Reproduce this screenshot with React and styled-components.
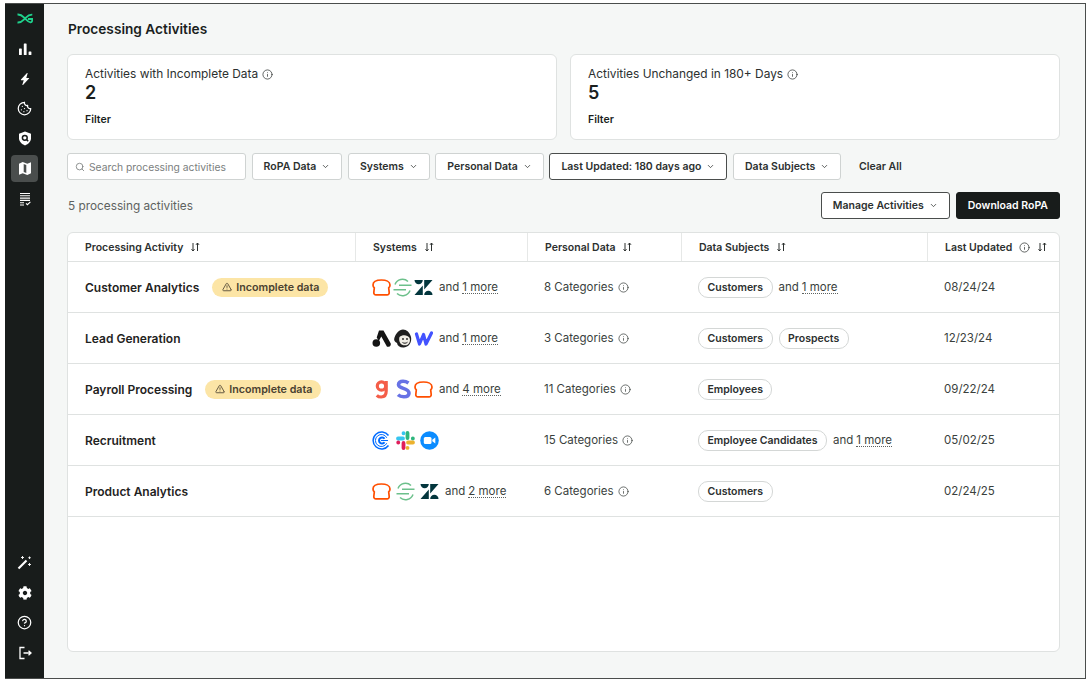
import React from 'react';
import styled, { createGlobalStyle } from 'styled-components';
import { ChevronDown, Search, Info, TriangleAlert, Cookie, CircleHelp } from 'lucide-react';
import { FaCog } from 'react-icons/fa';
import { BsLightningChargeFill } from 'react-icons/bs';

const GlobalStyle = createGlobalStyle`
  html, body {
    margin: 0;
    padding: 0;
    background: #fff;
  }
  body {
    font-family: Inter, "Liberation Sans", sans-serif;
    color: #1b1f1e;
  }
`;

const Frame = styled.div`
  box-sizing: border-box;
  display: flex;
  width: 1081px;
  height: 676px;
  margin: 3px 0 0 5px;
  border: solid #4a4d4c;
  border-width: 1px 1px 1px 0;
  background: #f5f7f6;
  overflow: hidden;
`;

const Sidebar = styled.nav`
  flex: none;
  width: 39px;
  background: #181c1b;
  display: flex;
  flex-direction: column;
  align-items: center;
  padding: 1px 0 12px;
  box-sizing: border-box;
`;

const NavGroup = styled.div`
  display: flex;
  flex-direction: column;
  align-items: center;
  gap: 3px;
`;

const NavItem = styled.div`
  width: 27px;
  height: 27px;
  border-radius: 4px;
  display: flex;
  align-items: center;
  justify-content: center;
  color: #fff;
  background: ${(p) => (p.$active ? '#4a4e4d' : 'transparent')};
`;

const Spacer = styled.div`
  flex: 1;
`;

const Main = styled.main`
  flex: 1;
  min-width: 0;
  padding: 16px 25px 26px 23px;
  display: flex;
  flex-direction: column;
  box-sizing: border-box;
`;

const Title = styled.h1`
  margin: 0 0 16px 1px;
  font-size: 13.7px;
  line-height: 18px;
  font-weight: 600;
`;

const Cards = styled.div`
  display: grid;
  grid-template-columns: 490px 490px;
  gap: 13px;
  margin-bottom: 13px;
`;

const Card = styled.section`
  box-sizing: border-box;
  height: 86px;
  padding: 11px 17px;
  background: #fff;
  border: 1px solid #dfe2e1;
  border-radius: 6px;
`;

const CardLabel = styled.div`
  display: flex;
  align-items: center;
  gap: 4px;
  font-size: 11.9px;
  line-height: 16px;
  color: #2c302f;
`;

const CardValue = styled.div`
  font-size: 18px;
  line-height: 22px;
  font-weight: 600;
`;

const CardFilter = styled.div`
  margin-top: 9px;
  font-size: 10.5px;
  line-height: 14px;
  font-weight: 600;
`;

const Filters = styled.div`
  display: flex;
  align-items: center;
  gap: 5.6px;
  margin-bottom: 12px;
`;

const SearchBox = styled.div`
  box-sizing: border-box;
  width: 179px;
  height: 27px;
  padding: 0 7px;
  display: flex;
  align-items: center;
  gap: 4px;
  background: #fff;
  border: 1px solid #cfd3d2;
  border-radius: 3px;
  font-size: 10.3px;
  color: #7b807e;
`;

const Button = styled.button`
  box-sizing: border-box;
  height: 27px;
  padding: 0 11px;
  display: inline-flex;
  align-items: center;
  gap: 5px;
  background: ${(p) => (p.$dark ? '#181c1b' : '#fff')};
  color: ${(p) => (p.$dark ? '#fff' : '#2c302f')};
  border: 1px solid ${(p) => (p.$dark ? '#181c1b' : p.$selected ? '#4a4d4c' : '#cfd3d2')};
  border-radius: 3px;
  font-family: inherit;
  font-size: 10.5px;
  font-weight: 600;
  white-space: nowrap;
`;

const ClearAll = styled.span`
  margin-left: 12px;
  font-size: 10.5px;
  font-weight: 600;
  color: #2c302f;
`;

const Toolbar = styled.div`
  display: flex;
  align-items: center;
  gap: 6px;
  margin-bottom: 13px;
`;

const Count = styled.div`
  flex: 1;
  margin-left: 1px;
  font-size: 11.8px;
  color: #5d6260;
`;

const Table = styled.div`
  flex: 1;
  background: #fff;
  border: 1px solid #dfe2e1;
  border-radius: 6px;
`;

const columns = '287px 172px 154px 246px 1fr';

const HeadRow = styled.div`
  display: grid;
  grid-template-columns: ${columns};
  height: 28px;
  border-bottom: 1px solid #dfe2e1;
`;

const HeadCell = styled.div`
  display: flex;
  align-items: center;
  gap: 7px;
  padding-left: 17px;
  font-size: 10.5px;
  font-weight: 600;
  color: #2c302f;
  & + & {
    border-left: 1px solid #e6e8e7;
  }
`;

const Row = styled.div`
  box-sizing: border-box;
  display: grid;
  grid-template-columns: ${columns};
  height: 51px;
  border-bottom: 1px solid #dfe2e1;
`;

const Cell = styled.div`
  display: flex;
  align-items: center;
  padding-left: 17px;
  font-size: 11.5px;
  color: #3a3f3d;
  white-space: nowrap;
`;

const ActivityName = styled.span`
  font-size: 12px;
  font-weight: 600;
  color: #1f2322;
`;

const Warning = styled.span`
  display: inline-flex;
  align-items: center;
  gap: 4px;
  height: 19px;
  margin-left: 13px;
  padding: 0 9px 0 10px;
  border-radius: 10px;
  background: #fce5a6;
  font-size: 10.7px;
  font-weight: 600;
  color: #4a4130;
`;

const Logos = styled.span`
  display: inline-flex;
  align-items: center;
  gap: ${(p) => p.$gap}px;
  margin-right: 6px;
`;

const More = styled.span`
  margin-left: 3px;
  border-bottom: 1px dotted #5d6260;
  line-height: 12px;
`;

const Tag = styled.span`
  display: inline-flex;
  align-items: center;
  height: 19px;
  padding: 0 8.500px;
  margin-right: 6px;
  border: 1px solid #d4d7d6;
  border-radius: 10px;
  font-size: 10.5px;
  font-weight: 600;
  color: #2c302f;
`;

const InfoIcon = styled(Info).attrs({ size: 11, strokeWidth: 1.6 })`
  flex: none;
  margin-left: ${(p) => p.$gap || 0}px;
`;

const Chevron = () => <ChevronDown size={9} strokeWidth={2} />;

const Sort = () => (
  <svg width="10" height="10" viewBox="0 0 10 10" fill="none" stroke="#2c302f" strokeWidth="1">
    <path d="M3 1v8M1.500 7.200 3 9l1.500-1.800M7.500 9V1M6 2.800 7.500 1 9 2.800" />
  </svg>
);

const BrandLogo = () => (
  <svg width="16" height="11" viewBox="0 0 16 11" fill="none" stroke="#1fd18c" strokeWidth="1.800">
    <path d="M0.500 1.500C4.500 1.200 6 3.500 8 5.500s3.500 4 5.500 3.800c1.500-.2 1.900-1.500 1.800-3.300H11" />
    <path d="M0.500 9.500C4.500 9.800 6 7.500 8 5.500s3.500-4 7.300-3.800" />
  </svg>
);

const BarsIcon = () => (
  <svg width="14" height="14" viewBox="0 0 14 14" fill="#fff">
    <rect x="1" y="6.500" width="2.800" height="6.500" rx=".6" />
    <rect x="5.800" y="1.500" width="2.800" height="11.500" rx=".6" />
    <rect x="10.600" y="9.500" width="2.800" height="3.500" rx=".6" />
  </svg>
);

const ShieldIcon = () => (
  <svg width="14" height="15" viewBox="0 0 14 15">
    <path d="M7 .6 13 2.800v4.400c0 3.300-2.600 5.800-6 7.200-3.400-1.400-6-3.900-6-7.200V2.800z" fill="#fff" />
    <circle cx="6.800" cy="6.800" r="2.400" fill="none" stroke="#181c1b" strokeWidth="1.500" />
    <path d="m8.600 8.600 1.600 1.600" stroke="#181c1b" strokeWidth="1.500" />
  </svg>
);

const MapIcon = () => (
  <svg width="14" height="15" viewBox="0 0 14 15">
    <path d="M1 2.800 4.700 1l4.600 1.800L13 1.200v11l-3.700 1.800-4.600-1.800L1 13.800z" fill="#fff" />
    <path d="M5.700 2.900 8.300 4v8.100L5.700 11z" fill="#4a4e4d" />
  </svg>
);

const ListIcon = () => (
  <svg width="14" height="14" viewBox="0 0 14 14" fill="none" stroke="#fff" strokeWidth="1.100">
    <path d="M2 1.500h10M2 3.800h10M2 6.100h10M2 8.400h10M2 10.700h4M2 13h4" />
    <path d="m8 11.300 1.400 1.400 3-2.900" />
  </svg>
);

const WandIcon = () => (
  <svg width="15" height="15" viewBox="0 0 15 15" fill="none" stroke="#fff">
    <path d="M1.500 13.500 9.500 5.500" strokeWidth="2.200" />
    <path d="M5.500 1v3M4 2.500h3M12.500 1.500v2.500M11.300 2.700h2.500M12.500 8v3M11 9.500h3" strokeWidth=".9" />
  </svg>
);

const LogoutIcon = () => (
  <svg width="14" height="14" viewBox="0 0 14 14" fill="none" stroke="#fff" strokeWidth="1.300">
    <path d="M6.500 1.500H2v11h4.500M5.500 7H13M10.500 4.800 13 7l-2.500 2.200" />
  </svg>
);

const Toast = () => (
  <svg width="19" height="19" viewBox="0 0 19 19" fill="none" stroke="#ff4f00" strokeWidth="1.700">
    <path d="M9.500 2c4.500 0 8.500 1.500 8.500 5 0 1.300-.6 2.300-1.300 2.900l.5 4.600c.1 1.400-.8 2.400-2.100 2.400H3.900c-1.300 0-2.200-1-2.100-2.400l.5-4.600C1.600 9.300 1 8.300 1 7c0-3.500 4-5 8.500-5z" />
  </svg>
);

const Segment = () => (
  <svg width="19" height="19" viewBox="0 0 19 19" fill="none" stroke="#6cc08b" strokeWidth="1.500">
    <path d="M6 7.200h12.500M0.500 11.800h12.500" />
    <path d="M2 6.500a8 8 0 0 1 13-3M17 12.500a8 8 0 0 1-13 3" />
  </svg>
);

const Zendesk = () => (
  <svg width="19" height="19" viewBox="0 0 19 19" fill="#03363d">
    <path d="M.500 2h8.300a4.150 4.150 0 0 1-8.300 0zM8.800 7.500V17H.500zM10.200 17a4.150 4.150 0 0 1 8.300 0zM10.200 2h8.300l-8.300 9.500z" />
  </svg>
);

const Airtable = () => (
  <svg width="19" height="19" viewBox="0 0 19 19" fill="#141414">
    <path d="M7 1.500h4.500L18.500 14a2.500 2.500 0 0 1-2 3.700h-1.500L9.300 7.500 6.800 12 4.700 8.500z" />
    <circle cx="4.300" cy="14" r="3.800" />
  </svg>
);

const Mailchimp = () => (
  <svg width="19" height="19" viewBox="0 0 19 19">
    <path d="M10 .5c3.500 0 7 3 8 7.500 1 4.500-1.500 10-7 10.500-4 .3-6.500-1.500-7-4.500C1.500 13 .5 11 1.500 8.500 3 4.500 6 .5 10 .5z" fill="#1f1f1f" />
    <path d="M6.500 8c2.500-2.500 8-2.500 10 .8 1 2 .5 5-1.500 6.700-2.500 1.700-6.500.8-8-1.800-1-1.700-1-4-.5-5.700z" fill="#f1eee6" />
    <circle cx="10" cy="10" r=".9" fill="#1f1f1f" />
    <circle cx="14" cy="10" r=".9" fill="#1f1f1f" />
    <path d="M9.500 13.500c1.500 1 3.500 1 5-.3" fill="none" stroke="#1f1f1f" />
  </svg>
);

const Webflow = () => (
  <svg width="19" height="19" viewBox="0 0 19 19" fill="none" stroke="#4353ff" strokeWidth="3.200" strokeLinejoin="round" strokeLinecap="round">
    <path d="M2.500 5 5.500 15 9.500 5.500 12 15 17.500 4" />
  </svg>
);

const Gusto = () => (
  <svg width="19" height="20" viewBox="0 0 19 20" fill="none" stroke="#f45d48" strokeWidth="3.200">
    <circle cx="9.500" cy="7" r="4.200" />
    <path d="M14.200 2v10c0 4-2 6-5 6-1.700 0-3.300-.6-4.400-1.700" />
  </svg>
);

const Stripe = () => (
  <svg width="19" height="20" viewBox="0 0 19 20" fill="none" stroke="#6772e5" strokeWidth="3.600">
    <path d="M15.500 4c-1.500-1-3.400-1.700-5.500-1.700-2.800 0-4.500 1.400-4.500 3.400 0 4.300 10.500 3 10.500 8.300 0 2.400-2 3.800-5.200 3.800-2.200 0-4.400-.7-5.800-2" />
  </svg>
);

const Calendly = () => (
  <svg width="19" height="19" viewBox="0 0 19 19" fill="none" stroke="#006bff">
    <path d="M16.500 4.500a8.500 8.500 0 1 0 0 10" strokeWidth="1.500" />
    <path d="M14.800 6.800a6 6 0 1 0 0 5.400" strokeWidth="1" />
    <path d="M12.500 7.800a3 3 0 1 0 0 3.400" strokeWidth="2" />
    <path d="M9 9.500h7" strokeWidth="1" />
  </svg>
);

const Slack = () => (
  <svg width="19" height="19" viewBox="0 0 19 19" fill="none" strokeWidth="3.800" strokeLinecap="round">
    <path d="M2 7.500h5M7.500 2.200v.1" stroke="#36c5f0" />
    <path d="M11.500 2v5M16.800 7.500h.1" stroke="#2eb67d" />
    <path d="M17 11.500h-5M11.500 16.800v.1" stroke="#ecb22e" />
    <path d="M7.500 17v-5M2.200 11.500h.1" stroke="#e01e5a" />
  </svg>
);

const Zoom = () => (
  <svg width="19" height="19" viewBox="0 0 19 19">
    <circle cx="9.500" cy="9.500" r="9.300" fill="#0b8cff" />
    <rect x="3.800" y="6" width="7.700" height="7" rx="1.500" fill="#fff" />
    <path d="m12.300 8.700 3-2.200v6l-3-2.200z" fill="#fff" />
  </svg>
);

const activities = [
  {
    name: 'Customer Analytics',
    warn: true,
    logos: [Toast, Segment, Zendesk],
    logoGap: 2,
    more: '1 more',
    categories: '8 Categories',
    tags: ['Customers'],
    tagMore: '1 more',
    date: '08/24/24',
  },
  {
    name: 'Lead Generation',
    logos: [Airtable, Mailchimp, Webflow],
    logoGap: 2,
    more: '1 more',
    categories: '3 Categories',
    tags: ['Customers', 'Prospects'],
    date: '12/23/24',
  },
  {
    name: 'Payroll Processing',
    warn: true,
    logos: [Gusto, Stripe, Toast],
    logoGap: 2,
    more: '4 more',
    categories: '11 Categories',
    tags: ['Employees'],
    date: '09/22/24',
  },
  {
    name: 'Recruitment',
    logos: [Calendly, Slack, Zoom],
    logoGap: 5,
    categories: '15 Categories',
    tags: ['Employee Candidates'],
    tagMore: '1 more',
    date: '05/02/25',
  },
  {
    name: 'Product Analytics',
    logos: [Toast, Segment, Zendesk],
    logoGap: 5,
    more: '2 more',
    categories: '6 Categories',
    tags: ['Customers'],
    date: '02/24/25',
  },
];

export default function App() {
  return (
    <>
      <GlobalStyle />
      <Frame>
        <Sidebar>
          <NavGroup>
            <NavItem><BrandLogo /></NavItem>
            <NavItem><BarsIcon /></NavItem>
            <NavItem><BsLightningChargeFill size={12} /></NavItem>
            <NavItem><Cookie size={15} /></NavItem>
            <NavItem><ShieldIcon /></NavItem>
            <NavItem $active><MapIcon /></NavItem>
            <NavItem><ListIcon /></NavItem>
          </NavGroup>
          <Spacer />
          <NavGroup>
            <NavItem><WandIcon /></NavItem>
            <NavItem><FaCog size={14} /></NavItem>
            <NavItem><CircleHelp size={15} /></NavItem>
            <NavItem><LogoutIcon /></NavItem>
          </NavGroup>
        </Sidebar>
        <Main>
          <Title>Processing Activities</Title>
          <Cards>
            <Card>
              <CardLabel>Activities with Incomplete Data <InfoIcon /></CardLabel>
              <CardValue>2</CardValue>
              <CardFilter>Filter</CardFilter>
            </Card>
            <Card>
              <CardLabel>Activities Unchanged in 180+ Days <InfoIcon /></CardLabel>
              <CardValue>5</CardValue>
              <CardFilter>Filter</CardFilter>
            </Card>
          </Cards>
          <Filters>
            <SearchBox><Search size={10} />Search processing activities</SearchBox>
            <Button>RoPA Data <Chevron /></Button>
            <Button>Systems <Chevron /></Button>
            <Button>Personal Data <Chevron /></Button>
            <Button $selected>Last Updated: 180 days ago <Chevron /></Button>
            <Button>Data Subjects <Chevron /></Button>
            <ClearAll>Clear All</ClearAll>
          </Filters>
          <Toolbar>
            <Count>5 processing activities</Count>
            <Button $selected>Manage Activities <Chevron /></Button>
            <Button $dark>Download RoPA</Button>
          </Toolbar>
          <Table>
            <HeadRow>
              <HeadCell>Processing Activity <Sort /></HeadCell>
              <HeadCell>Systems <Sort /></HeadCell>
              <HeadCell>Personal Data <Sort /></HeadCell>
              <HeadCell>Data Subjects <Sort /></HeadCell>
              <HeadCell>Last Updated <InfoIcon /> <Sort /></HeadCell>
            </HeadRow>
            {activities.map((a) => (
              <Row key={a.name}>
                <Cell>
                  <ActivityName>{a.name}</ActivityName>
                  {a.warn && <Warning><TriangleAlert size={10} />Incomplete data</Warning>}
                </Cell>
                <Cell>
                  <Logos $gap={a.logoGap}>{a.logos.map((Logo, i) => <Logo key={i} />)}</Logos>
                  {a.more && <>and <More>{a.more}</More></>}
                </Cell>
                <Cell>{a.categories}<InfoIcon $gap={4} /></Cell>
                <Cell>
                  {a.tags.map((t) => <Tag key={t}>{t}</Tag>)}
                  {a.tagMore && <>and <More>{a.tagMore}</More></>}
                </Cell>
                <Cell>{a.date}</Cell>
              </Row>
            ))}
          </Table>
        </Main>
      </Frame>
    </>
  );
}
